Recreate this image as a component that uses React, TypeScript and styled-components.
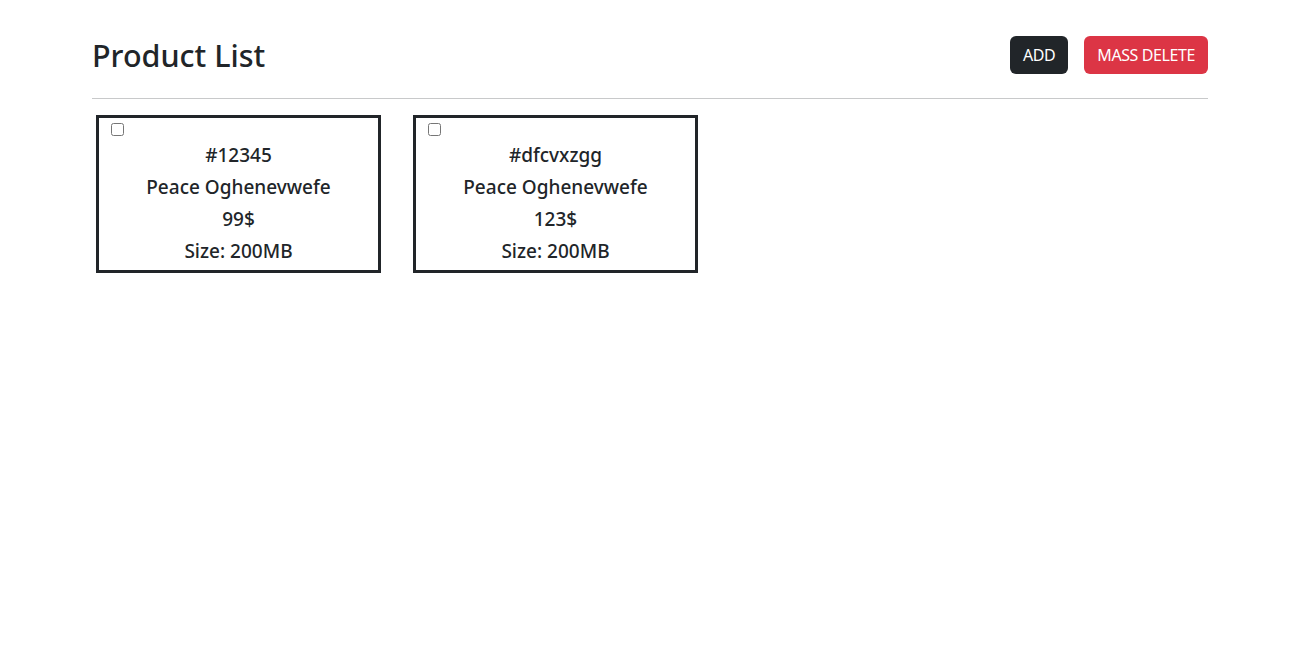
import React from "react";
import styled, { createGlobalStyle } from "styled-components";

const Global = createGlobalStyle`
  body {
    margin: 0;
    font-family: "Noto Sans", "Open Sans", sans-serif;
    color: #212529;
    background: #fff;
  }
`;

const Container = styled.div`
  width: 1116px;
  margin: 0 auto;
  padding-top: 36px;
  padding-left: 3px;
`;

const Header = styled.header`
  display: flex;
  align-items: center;
  justify-content: space-between;
  height: 38px;
`;

const Title = styled.h1`
  margin: 0;
  font-size: 30.5px;
  font-weight: 500;
  line-height: 38px;
`;

const Actions = styled.div`
  display: flex;
  gap: 16px;
`;

const Button = styled.button<{ $variant: "dark" | "danger" }>`
  font-family: inherit;
  font-size: 16px;
  line-height: 24px;
  letter-spacing: -0.4px;
  padding: 7px 13px;
  border: none;
  border-radius: 6px;
  color: #fff;
  background: ${(p) => (p.$variant === "dark" ? "#212529" : "#dc3545")};
  cursor: pointer;
`;

const Rule = styled.hr`
  margin: 24px 0 16px;
  border: 0;
  border-top: 1px solid #c8c9ca;
`;

const Grid = styled.div`
  display: flex;
  gap: 32px;
  padding-left: 4px;
`;

const Card = styled.div`
  width: 285px;
  box-sizing: border-box;
  border: 3px solid #212529;
  padding: 0 0 3px;
  display: flex;
  flex-direction: column;
`;

const CheckRow = styled.div`
  height: 21px;
  padding-left: 12px;
`;

const Check = styled.input`
  margin: 5px 0 0;
  width: 13px;
  height: 13px;
`;

const Line = styled.p`
  margin: 0;
  text-align: center;
  font-size: 19px;
  font-weight: 500;
  line-height: 32px;
`;

const products = [
  { sku: "#12345", name: "Peace Oghenevwefe", price: "99$", size: "Size: 200MB" },
  { sku: "#dfcvxzgg", name: "Peace Oghenevwefe", price: "123$", size: "Size: 200MB" },
];

export default function App() {
  return (
    <>
      <Global />
      <Container>
        <Header>
          <Title>Product List</Title>
          <Actions>
            <Button $variant="dark">ADD</Button>
            <Button $variant="danger">MASS DELETE</Button>
          </Actions>
        </Header>
        <Rule />
        <Grid>
          {products.map((p) => (
            <Card key={p.sku}>
              <CheckRow>
                <Check type="checkbox" />
              </CheckRow>
              <Line>{p.sku}</Line>
              <Line>{p.name}</Line>
              <Line>{p.price}</Line>
              <Line>{p.size}</Line>
            </Card>
          ))}
        </Grid>
      </Container>
    </>
  );
}
